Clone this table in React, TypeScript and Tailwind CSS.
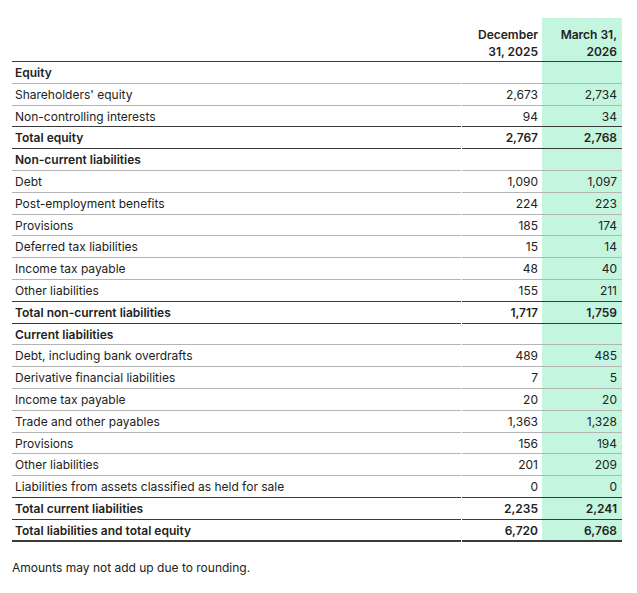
import React from 'react'

type Row = {
  label: string
  dec?: string
  mar?: string
  kind: 'head' | 'item' | 'total'
  // line under the row
  line: 'light' | 'dark' | 'heavy'
}

const rows: Row[] = [
  { label: 'Equity', kind: 'head', line: 'light' },
  { label: "Shareholders' equity", dec: '2,673', mar: '2,734', kind: 'item', line: 'light' },
  { label: 'Non-controlling interests', dec: '94', mar: '34', kind: 'item', line: 'dark' },
  { label: 'Total equity', dec: '2,767', mar: '2,768', kind: 'total', line: 'dark' },
  { label: 'Non-current liabilities', kind: 'head', line: 'light' },
  { label: 'Debt', dec: '1,090', mar: '1,097', kind: 'item', line: 'light' },
  { label: 'Post-employment benefits', dec: '224', mar: '223', kind: 'item', line: 'light' },
  { label: 'Provisions', dec: '185', mar: '174', kind: 'item', line: 'light' },
  { label: 'Deferred tax liabilities', dec: '15', mar: '14', kind: 'item', line: 'light' },
  { label: 'Income tax payable', dec: '48', mar: '40', kind: 'item', line: 'light' },
  { label: 'Other liabilities', dec: '155', mar: '211', kind: 'item', line: 'dark' },
  { label: 'Total non-current liabilities', dec: '1,717', mar: '1,759', kind: 'total', line: 'dark' },
  { label: 'Current liabilities', kind: 'head', line: 'light' },
  { label: 'Debt, including bank overdrafts', dec: '489', mar: '485', kind: 'item', line: 'light' },
  { label: 'Derivative financial liabilities', dec: '7', mar: '5', kind: 'item', line: 'light' },
  { label: 'Income tax payable', dec: '20', mar: '20', kind: 'item', line: 'light' },
  { label: 'Trade and other payables', dec: '1,363', mar: '1,328', kind: 'item', line: 'light' },
  { label: 'Provisions', dec: '156', mar: '194', kind: 'item', line: 'light' },
  { label: 'Other liabilities', dec: '201', mar: '209', kind: 'item', line: 'light' },
  { label: 'Liabilities from assets classified as held for sale', dec: '0', mar: '0', kind: 'item', line: 'dark' },
  { label: 'Total current liabilities', dec: '2,235', mar: '2,241', kind: 'total', line: 'dark' },
  { label: 'Total liabilities and total equity', dec: '6,720', mar: '6,768', kind: 'total', line: 'heavy' },
]

const lineClass = {
  light: 'border-b border-[#b4b4b4]',
  dark: 'border-b border-[#3a3a3a]',
  heavy: 'border-b-2 border-[#3a3a3a]',
}

export default function App() {
  return (
    <div
      className="w-[637px] h-[593px] bg-white text-[#222] pl-[12px] pr-[15px] pt-[18px]"
      style={{ fontFamily: 'Inter, "Noto Sans", sans-serif' }}
    >
      {/* Header */}
      <div className="flex border-b border-[#3a3a3a] text-[12px] font-semibold leading-[17px]">
        <div className="flex-1" />
        <div className="w-[80px] ml-px text-right pr-[4px] pt-[8px] pb-[1px]">
          December
          <br />
          31, 2025
        </div>
        <div className="w-[80px] text-right pr-[5px] pt-[8px] pb-[1px] bg-[#c4f5df]">
          March 31,
          <br />
          2026
        </div>
      </div>

      {rows.map((r, i) => {
        const bold = r.kind !== 'item'
        const line = lineClass[r.line]
        return (
          <div
            key={i}
            className={`flex h-[21.8px] text-[12px] leading-[21px] ${bold ? 'font-semibold' : 'font-normal'}`}
          >
            <div className={`flex-1 pl-[3px] ${line}`}>{r.label}</div>
            <div className={`w-[80px] ml-px text-right pr-[4px] ${line}`}>{r.dec ?? ''}</div>
            <div className={`w-[80px] text-right pr-[5px] bg-[#c4f5df] ${line}`}>{r.mar ?? ''}</div>
          </div>
        )
      })}

      <p className="mt-[18px] text-[12px] leading-[16px]">Amounts may not add up due to rounding.</p>
    </div>
  )
}
